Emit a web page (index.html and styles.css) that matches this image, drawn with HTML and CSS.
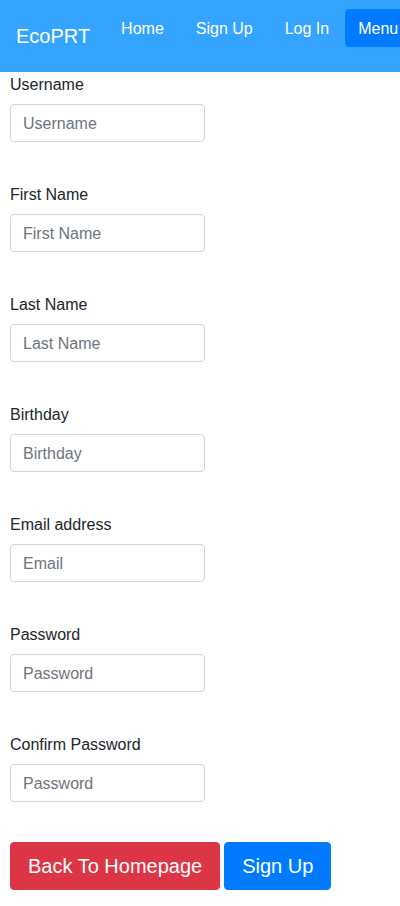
FILE: index.html
```html
<!DOCTYPE html>
<html lang="en">
<head>
<meta charset="utf-8">
<title>EcoPRT - Sign Up</title>
<link rel="stylesheet" href="styles.css">
</head>
<body>
<nav class="navbar">
  <a class="brand" href="#">EcoPRT</a>
  <ul class="nav-links">
    <li><a class="nav-link" href="#">Home</a></li>
    <li><a class="nav-link" href="#">Sign Up</a></li>
    <li><a class="nav-link" href="#">Log In</a></li>
    <li><a class="nav-link menu-btn" href="#">Menu</a></li>
  </ul>
</nav>
<form class="signup-form">
  <div class="form-group">
    <label class="form-label">Username</label>
    <input class="form-input" type="text" placeholder="Username">
  </div>
  <div class="form-group">
    <label class="form-label">First Name</label>
    <input class="form-input" type="text" placeholder="First Name">
  </div>
  <div class="form-group">
    <label class="form-label">Last Name</label>
    <input class="form-input" type="text" placeholder="Last Name">
  </div>
  <div class="form-group">
    <label class="form-label">Birthday</label>
    <input class="form-input" type="text" placeholder="Birthday">
  </div>
  <div class="form-group">
    <label class="form-label">Email address</label>
    <input class="form-input" type="text" placeholder="Email">
  </div>
  <div class="form-group">
    <label class="form-label">Password</label>
    <input class="form-input" type="password" placeholder="Password">
  </div>
  <div class="form-group">
    <label class="form-label">Confirm Password</label>
    <input class="form-input" type="password" placeholder="Password">
  </div>
  <div class="actions">
    <button type="button" class="btn btn-danger">Back To Homepage</button>
    <button type="button" class="btn btn-primary">Sign Up</button>
  </div>
</form>
</body>
</html>
```
FILE: styles.css
```css
* { box-sizing: border-box; }
html, body {
  margin: 0;
  padding: 0;
  background: #fff;
  overflow-x: hidden;
}
body {
  font-family: "Liberation Sans", Arial, sans-serif;
  font-size: 16px;
  line-height: 24px;
  color: #212529;
}
.navbar {
  display: flex;
  align-items: flex-start;
  height: 72px;
  padding-left: 16px;
  background: #35a4fe;
  overflow: hidden;
  white-space: nowrap;
}
.brand {
  flex-shrink: 0;
  margin-top: 21px;
  margin-right: 15px;
  font-size: 20px;
  line-height: 30px;
  color: #fff;
  text-decoration: none;
}
.nav-links {
  display: flex;
  flex-shrink: 0;
  margin: 9px 0 0;
  padding: 0;
  list-style: none;
}
.nav-link {
  display: block;
  padding: 8px 16px 6px;
  line-height: 24px;
  color: #fff;
  text-decoration: none;
}
.menu-btn {
  padding: 8px 12px 6px 13px;
  background: #007bff;
  border-radius: 4px;
}
.signup-form {
  padding: 0 10px 16px;
}
.form-group {
  margin-bottom: 40px;
}
.form-label {
  display: block;
  padding-top: 1px;
  margin-bottom: 7px;
  line-height: 24px;
}
.form-input {
  display: block;
  width: 195px;
  height: 38px;
  padding: 7px 12px 5px;
  border: 1px solid #ced4da;
  border-radius: 4px;
  font-family: inherit;
  font-size: 16px;
  line-height: 24px;
  color: #495057;
  background: #fff;
}
.form-input::placeholder {
  color: #6c757d;
  opacity: 1;
}
.actions {
  display: flex;
  gap: 4px;
}
.btn {
  padding: 8px 17px;
  border: 1px solid transparent;
  border-radius: 4px;
  font-family: inherit;
  font-size: 20px;
  line-height: 30px;
  color: #fff;
  cursor: pointer;
}
.btn-danger {
  background: #dc3545;
  border-color: #dc3545;
}
.btn-primary {
  background: #007bff;
  border-color: #007bff;
}
```
